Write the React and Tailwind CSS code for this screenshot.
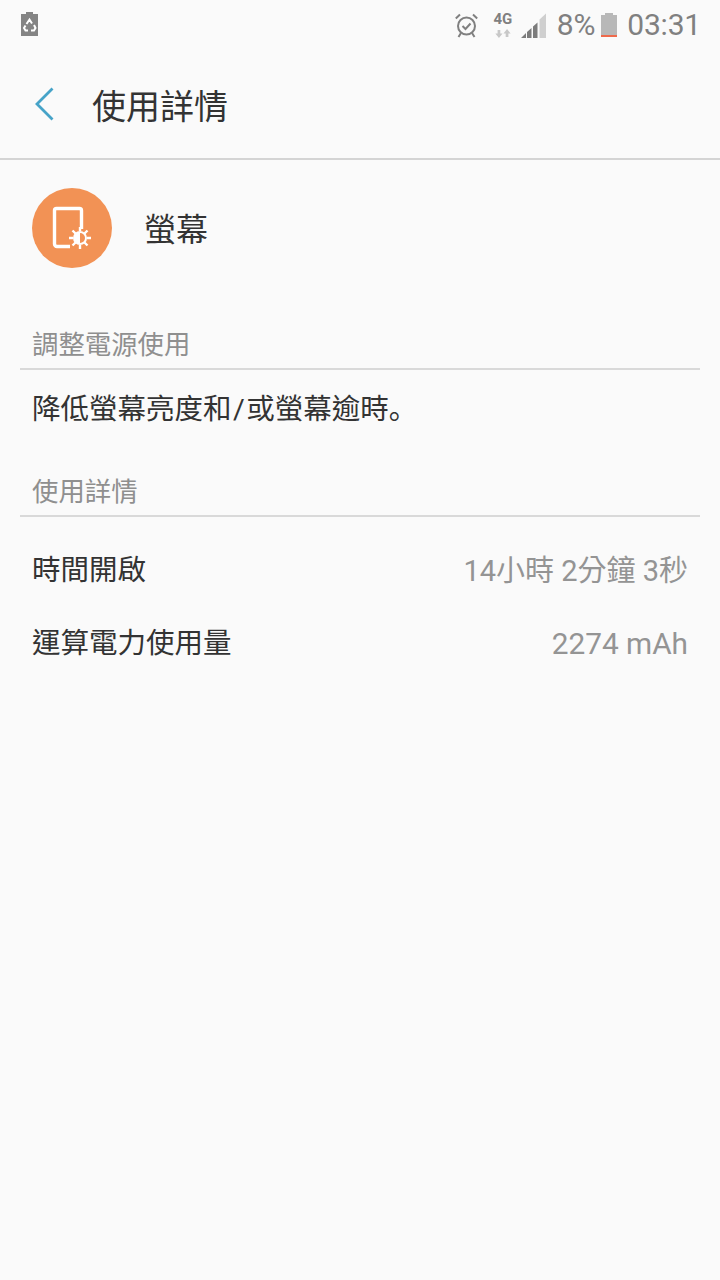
export default function App() {
  const font = { fontFamily: '"Roboto", "Noto Sans CJK TC", sans-serif' };
  return (
    <div style={font} className="w-[720px] h-[1280px] bg-[#fafafa] flex flex-col overflow-hidden">
      {/* status bar */}
      <div className="h-[50px] shrink-0 flex items-center pl-[21px] pr-[19px] text-[#808080]">
        <svg width="17" height="24" viewBox="0 0 17 24" className="mt-[-2px]">
          <path d="M5 0h7v2h5v22H0V2h5z" fill="#848484" />
          <path d="M5.500 12L8.500 7.500L11 11.500M13 13l1.500 3-1.500 2.500H10M7 18.500H4.500L3 16l1.500-2.500" fill="none" stroke="#fff" strokeWidth="2" />
        </svg>
        <div className="flex-1" />
        <svg width="23" height="25" viewBox="0 0 23 25" className="mr-[15px]" fill="none" stroke="#808080">
          <circle cx="11.500" cy="13" r="8.500" strokeWidth="2" />
          <path d="M7.500 13l3 3 5-5.500" strokeWidth="2" />
          <path d="M0.800 5.500L5 1.500M22.200 5.500L18 1.500M6 20l-2.500 4M17 20l2.500 4" strokeWidth="2" />
        </svg>
        <div className="w-[20px] mr-[8px] flex flex-col items-center">
          <span className="text-[15px] leading-[15px] font-bold text-[#808080]">4G</span>
          <svg width="18" height="9" viewBox="0 0 18 10" className="mt-[2px]" fill="#c8c8c8">
            <path d="M3 1h3v4h2.500L4.500 10 .5 5H3zM12 9h3V5h2.500L13.500 0l-4 5H12z" />
          </svg>
        </div>
        <svg width="25" height="25" viewBox="0 0 25 25" className="mr-[11px]">
          <path d="M25 0.500V25H18.500V6.500z" fill="#cfcfcf" />
          <path d="M0 25L5 20v5zM6 25V19L10.500 15V25zM12 25V13.500L16.500 9.500V25z" fill="#7c7c7c" />
        </svg>
        <span className="text-[30px] leading-[30px] text-[#808080] mr-[6px] tracking-[-0.2px]">8%</span>
        <div className="w-[16px] h-[24px] flex flex-col items-center mr-[10px]">
          <div className="w-[8px] h-[2px] bg-[#b8b8b8]" />
          <div className="w-[16px] flex-1 bg-[#b8b8b8]" />
          <div className="w-[16px] h-[2px] bg-[#ee6a4c]" />
        </div>
        <span className="text-[30px] leading-[30px] text-[#808080] tracking-[-0.2px]">03:31</span>
      </div>
      {/* app bar */}
      <div className="h-[110px] shrink-0 flex items-center border-b-2 border-[#d4d4d4] pt-[5px]">
        <svg width="20" height="34" viewBox="0 0 20 34" className="ml-[35px] mb-[6px]" fill="none" stroke="#46a3c8" strokeWidth="2.800">
          <path d="M17.500 1.500L2 17l15.500 15.500" />
        </svg>
        <span className="ml-[37px] text-[34px] leading-[40px] text-[#333333]">使用詳情</span>
      </div>
      {/* app row */}
      <div className="flex items-center pl-[32px] pt-[28px]">
        <div className="w-[80px] h-[80px] rounded-full bg-[#f29255]">
          <svg width="80" height="80" viewBox="0 0 80 80" fill="none" stroke="#fff">
            <path d="M49.500 41V22.500a2 2 0 0 0-2-2H24.500a2 2 0 0 0-2 2V56a2.500 2.500 0 0 0 2.500 2.500h13" strokeWidth="3.400" />
            <circle cx="48" cy="50" r="7" fill="#fff" stroke="none" />
            <path d="M48 45a5 5 0 0 1 0 10z" fill="#f29255" stroke="none" />
            <path d="M48 39v4M48 57v4M37 50h4M55 50h4M40.500 42.500l3 3M52.500 54.500l3 3M55.500 42.500l-3 3M43.500 54.500l-3 3" strokeWidth="2.400" />
          </svg>
        </div>
        <span className="ml-[32px] mt-[3px] text-[32px] leading-[40px] text-[#333333]">螢幕</span>
      </div>
      {/* section 1 */}
      <div className="mx-[20px] mt-[55px] h-[47px] px-[12px] pb-[2px] border-b-2 border-[#d9d9d9] flex items-center">
        <span className="text-[26.400px] leading-[36px] text-[#8f8f8f]">調整電源使用</span>
      </div>
      <div className="px-[32px] h-[100px] pt-[19px]">
        <span className="block text-[28.500px] leading-[36px] text-[#333333]">
          降低螢幕亮度和<span className="px-[1.500px]">/</span>或螢幕逾時
          <span style={{ fontFamily: '"Noto Sans CJK JP", sans-serif' }}>。</span>
        </span>
      </div>
      {/* section 2 */}
      <div className="mx-[20px] h-[47px] px-[12px] pb-[2px] border-b-2 border-[#d9d9d9] flex items-center">
        <span className="text-[26.400px] leading-[36px] text-[#8f8f8f]">使用詳情</span>
      </div>
      <div className="pt-[18px]">
        <div className="h-[73px] px-[32px] flex items-center justify-between">
          <span className="text-[28.500px] text-[#333333]">時間開啟</span>
          <span className="text-[29px] text-[#949494]">14小時 2分鐘 3秒</span>
        </div>
        <div className="h-[73px] px-[32px] flex items-center justify-between">
          <span className="text-[28.500px] text-[#333333]">運算電力使用量</span>
          <span className="text-[29.800px] text-[#949494]">2274 mAh</span>
        </div>
      </div>
    </div>
  );
}
